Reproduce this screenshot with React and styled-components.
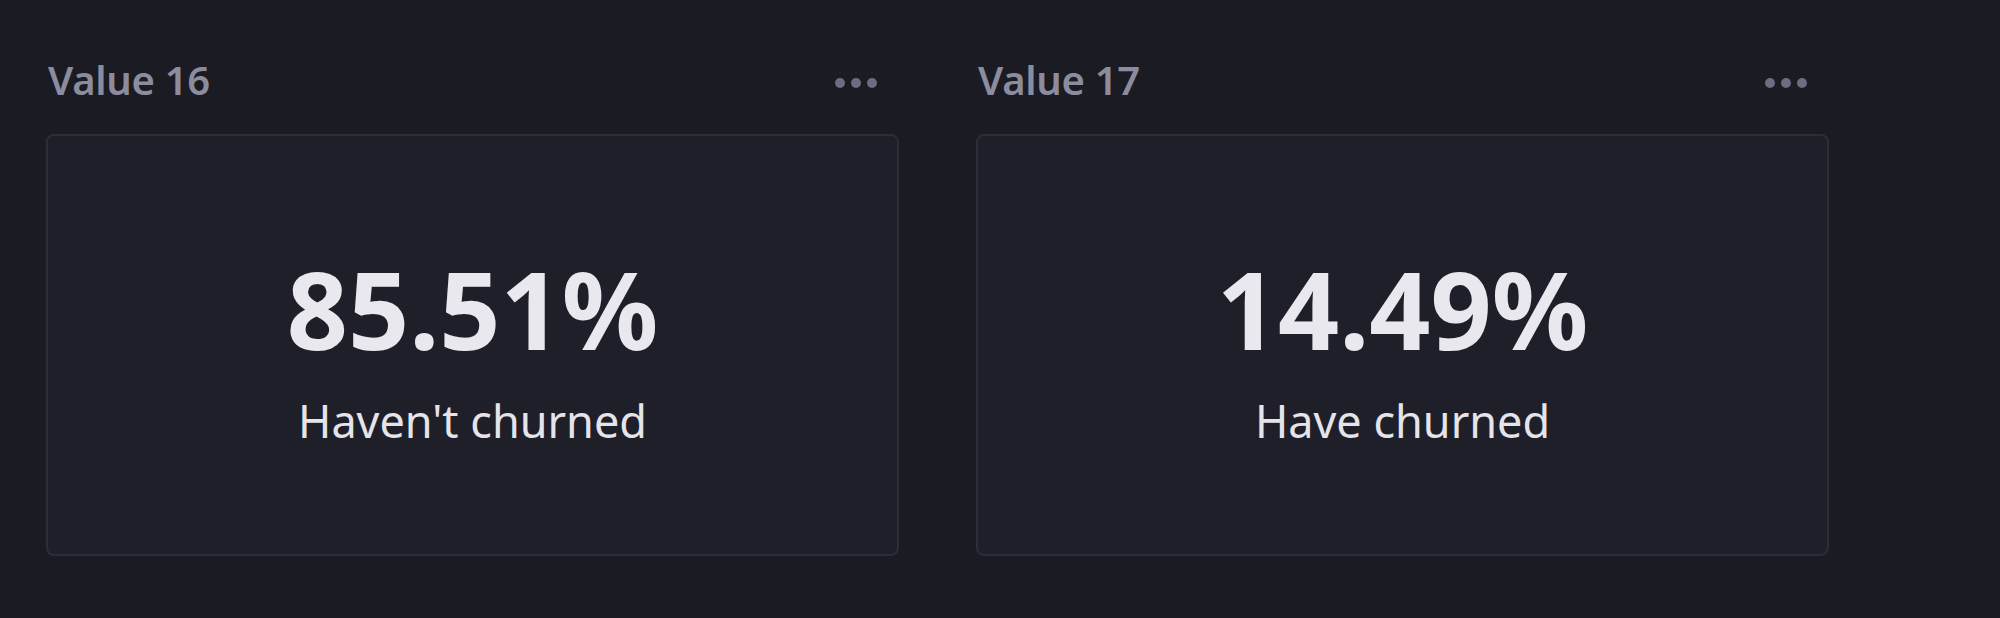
import styled, { createGlobalStyle } from "styled-components";

const GlobalStyle = createGlobalStyle`
  html, body {
    margin: 0;
    padding: 0;
    background: #1b1b23;
  }

  body {
    font-family: "Noto Sans", "Open Sans", sans-serif;
  }
`;

const Board = styled.div`
  display: grid;
  grid-template-columns: repeat(2, 853px);
  column-gap: 77px;
  padding: 48px 0 0 46px;
  min-height: 618px;
  box-sizing: border-box;
  background: #1b1b23;
`;

const Panel = styled.section`
  display: flex;
  flex-direction: column;
`;

const PanelHeader = styled.div`
  display: flex;
  align-items: center;
  justify-content: space-between;
  height: 64px;
  margin-bottom: 22px;
  padding: 0 22px 0 2px;
`;

const Title = styled.h3`
  margin: 0;
  font-size: 40px;
  font-weight: 600;
  line-height: 64px;
  color: #8b8d9e;
  letter-spacing: -0.3px;
`;

const MoreButton = styled.button`
  display: flex;
  align-items: center;
  gap: 6px;
  padding: 0;
  margin-top: 6px;
  border: none;
  background: none;
  cursor: pointer;
`;

const Dot = styled.span`
  width: 10px;
  height: 10px;
  border-radius: 50%;
  background: #6b6d80;
`;

const Card = styled.div`
  display: flex;
  flex-direction: column;
  align-items: center;
  justify-content: center;
  height: 422px;
  box-sizing: border-box;
  padding-bottom: 2px;
  border: 2px solid #2d2d39;
  border-radius: 8px;
  background: #1f1f29;
`;

const Metric = styled.div`
  font-size: 107px;
  font-weight: 700;
  line-height: 146px;
  color: #e8e8ee;
`;

const Caption = styled.div`
  margin-top: 8px;
  font-size: 45px;
  font-weight: 400;
  line-height: 62px;
  color: #e4e4ea;
`;

const values = [
  { title: "Value 16", metric: "85.51%", caption: "Haven't churned" },
  { title: "Value 17", metric: "14.49%", caption: "Have churned" },
];

export default function App() {
  return (
    <>
      <GlobalStyle />
      <Board>
        {values.map((v) => (
          <Panel key={v.title}>
            <PanelHeader>
              <Title>{v.title}</Title>
              <MoreButton aria-label="More options">
                <Dot />
                <Dot />
                <Dot />
              </MoreButton>
            </PanelHeader>
            <Card>
              <Metric>{v.metric}</Metric>
              <Caption>{v.caption}</Caption>
            </Card>
          </Panel>
        ))}
      </Board>
    </>
  );
}
